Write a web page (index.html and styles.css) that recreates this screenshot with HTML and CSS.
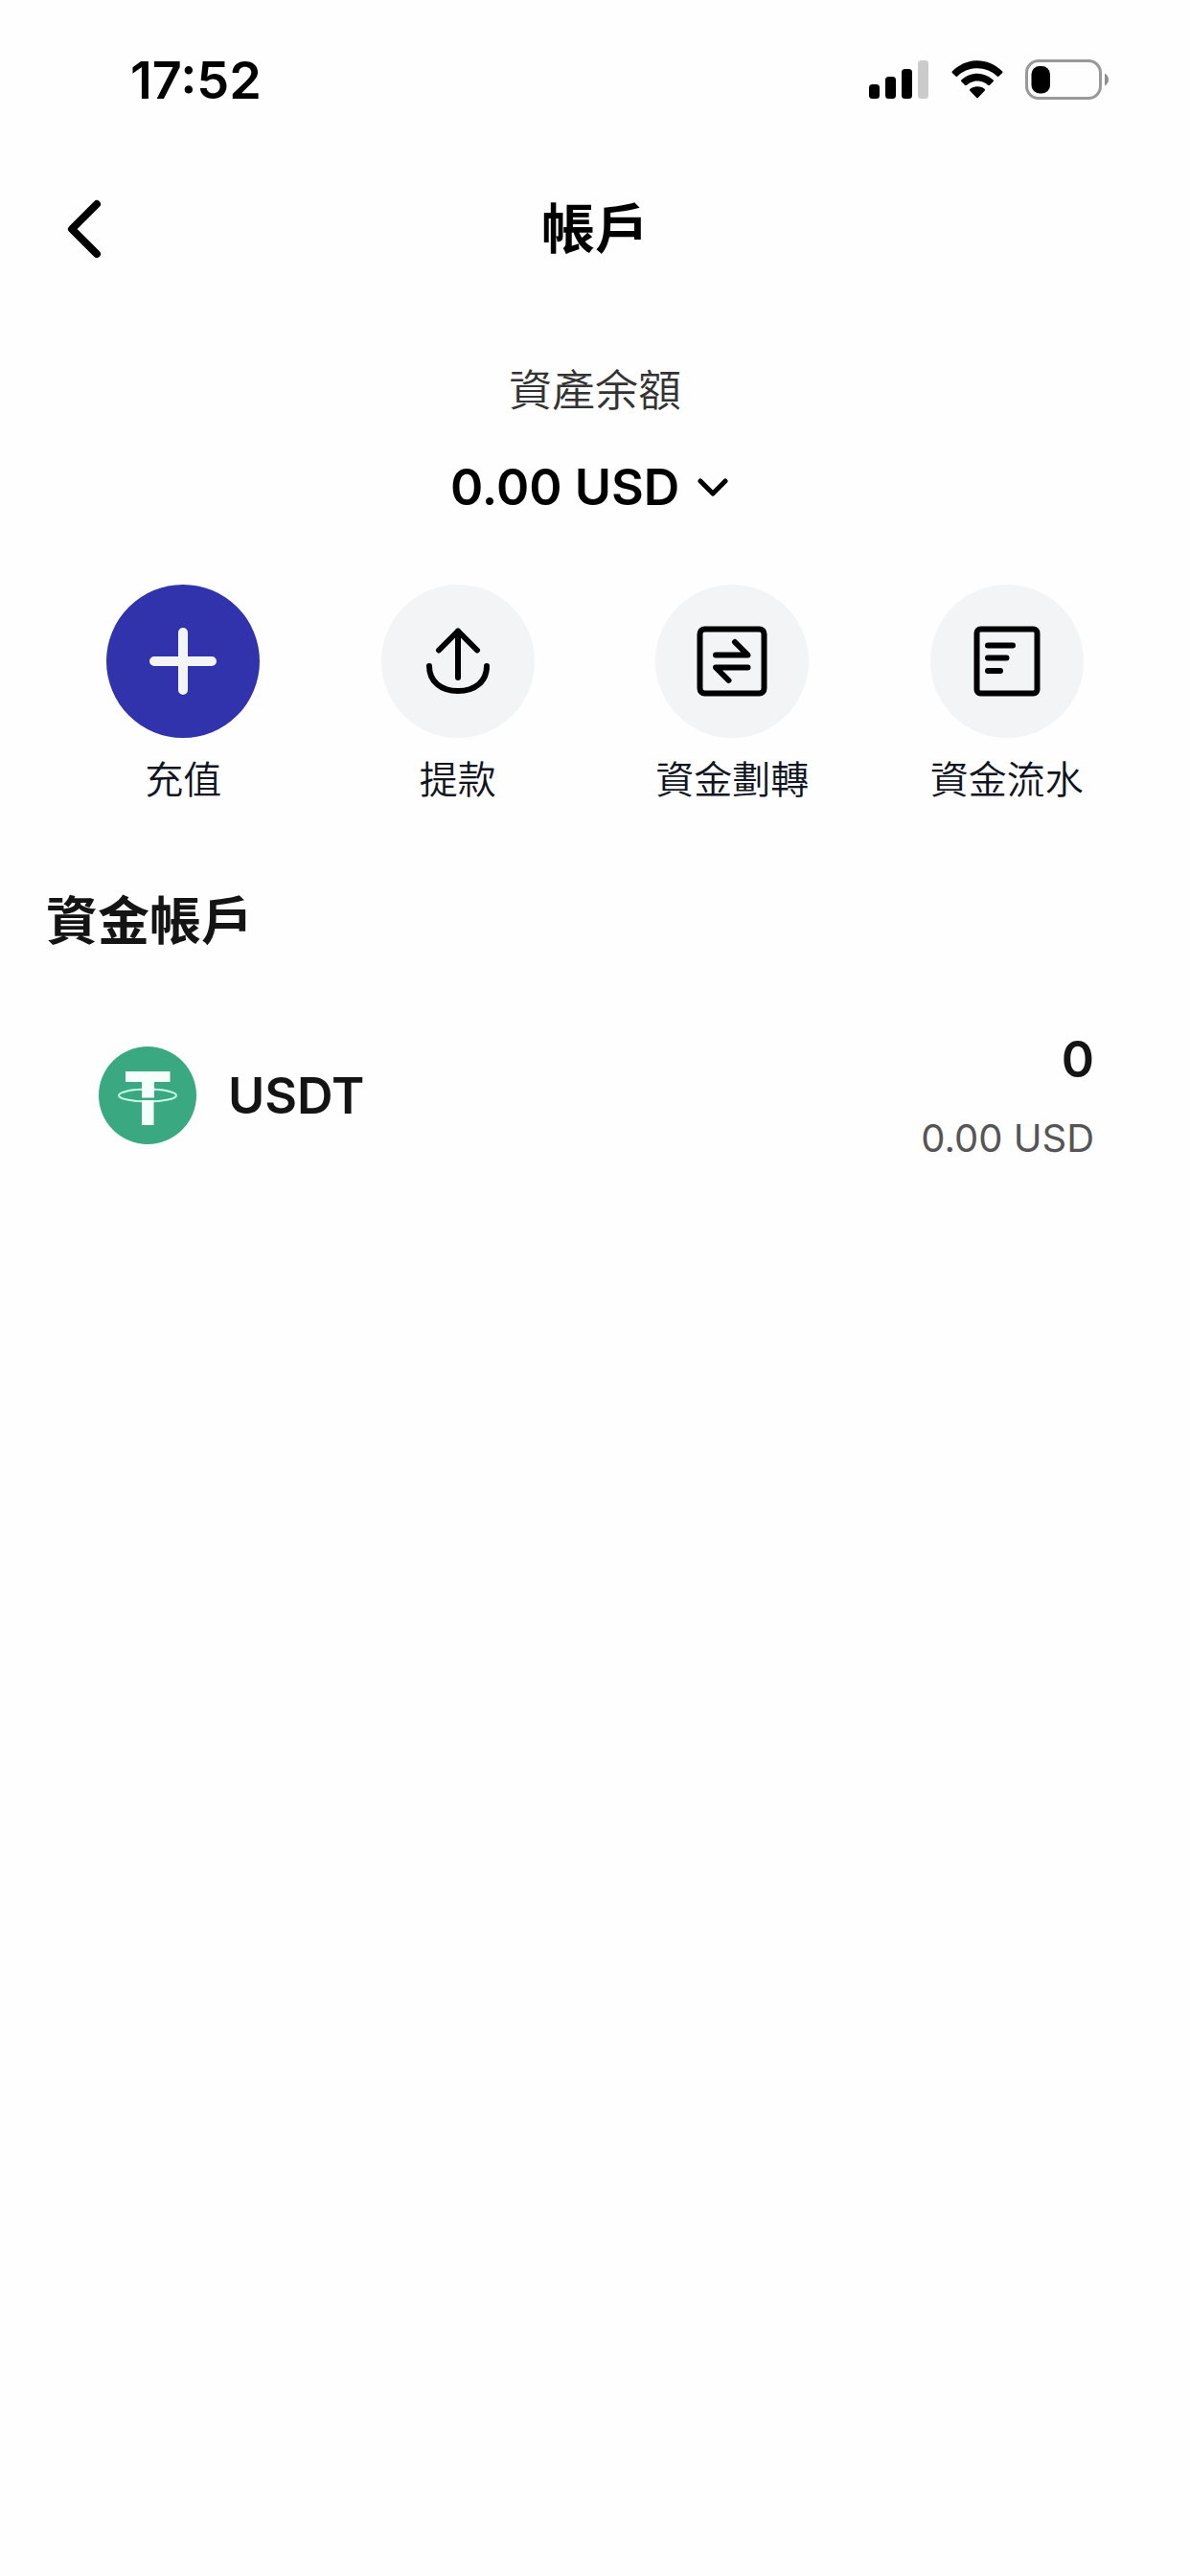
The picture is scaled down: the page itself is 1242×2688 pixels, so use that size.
FILE: index.html
```html
<!DOCTYPE html>
<html lang="zh-Hant">
<head>
  <meta charset="UTF-8">
  <meta name="viewport" content="width=device-width, initial-scale=1">
  <title>帳戶</title>
  <link rel="stylesheet" href="styles.css">
</head>
<body>
  <div class="status-bar">
    <span class="time">17:52</span>
    <div class="status-icons">
      <svg width="63" height="42" viewBox="0 0 63 42">
        <rect x="0" y="26" width="11" height="15" rx="3.5"/>
        <rect x="17" y="18" width="11" height="23" rx="3.5"/>
        <rect x="34" y="10" width="11" height="31" rx="3.5"/>
        <rect x="51" y="1" width="11" height="40" rx="3.5" fill="#cbcbcb"/>
      </svg>
      <svg width="54" height="42" viewBox="0 0 54 42">
        <path d="M1 12.2C16-2.500 38-2.500 53 12.200Q54 13.200 53 14.200L49.500 17.500Q48.600 18.300 47.600 17.400C36 6.500 18 6.500 6.400 17.400Q5.400 18.300 4.500 17.500L1 14.200Q0 13.200 1 12.200Z"/>
        <path d="M10.500 21.300C20 12.500 34 12.500 43.500 21.300Q44.500 22.300 43.500 23.300L40 26.700Q39 27.600 38 26.700C31.500 21.200 22.500 21.200 16 26.700Q15 27.600 14 26.700L10.500 23.300Q9.500 22.300 10.500 21.300Z"/>
        <path d="M19.500 30.700C24 27.500 30 27.500 34.500 30.700Q35.600 31.700 34.600 32.700L28 39.800Q27 40.800 26 39.800L19.400 32.700Q18.400 31.700 19.500 30.700Z"/>
      </svg>
      <svg width="88" height="42" viewBox="0 0 88 42">
        <rect x="1.500" y="1.500" width="77" height="39" rx="12.500" fill="none" stroke="#999" stroke-width="3"/>
        <rect x="6.500" y="7" width="19.500" height="28.500" rx="8.500"/>
        <path d="M83 14.500C88.300 17 88.300 25 83 27.500Z" fill="#8e8e8e"/>
      </svg>
    </div>
  </div>

  <header class="nav-bar">
    <button class="back" type="button" aria-label="返回">
      <svg width="36" height="62" viewBox="0 0 36 62">
        <path d="M31 5L5 31L31 57"/>
      </svg>
    </button>
    <h1>帳戶</h1>
  </header>

  <main>
    <section class="balance">
      <label for="currency">資產余額</label>
      <div class="balance-value">
        <select id="currency">
          <option>0.00 USD</option>
        </select>
        <svg width="56" height="56" viewBox="0 0 56 56">
          <path d="M15 22L28 35L41 22"/>
        </svg>
      </div>
    </section>

    <nav class="actions">
      <a class="action primary" href="#deposit">
        <svg viewBox="0 0 160 160">
          <path d="M80 50V110M50 80H110" stroke-width="10"/>
        </svg>
        <span>充值</span>
      </a>
      <a class="action" href="#withdraw">
        <svg viewBox="0 0 160 160">
          <path d="M80 97V48.500M60 68.500L80 48.500L100 68.500M50 85C50 101 62 111 80 111C98 111 110 101 110 85"/>
        </svg>
        <span>提款</span>
      </a>
      <a class="action" href="#transfer">
        <svg viewBox="0 0 160 160">
          <rect x="46.500" y="46.500" width="67" height="67" rx="5"/>
          <path d="M63 73.500H96.500L83 60M96.500 86.500H63L76.500 100"/>
        </svg>
        <span>資金劃轉</span>
      </a>
      <a class="action" href="#records">
        <svg viewBox="0 0 160 160">
          <rect x="48.500" y="46.500" width="63" height="67" rx="4"/>
          <path d="M60 63.500H86M60 76.500H79.500M60 90H73"/>
        </svg>
        <span>資金流水</span>
      </a>
    </nav>

    <section class="funds">
      <h2>資金帳戶</h2>
      <ul class="assets">
        <li>
          <svg class="coin" width="102" height="102" viewBox="0 0 102 102">
            <circle cx="51" cy="51" r="51" fill="#3aa981"/>
            <ellipse cx="51" cy="51" rx="30" ry="6.500" fill="none" stroke="#c9ffe9" stroke-width="2"/>
            <path d="M28 26H74.500V37H58V53.500H45V37H28ZM45 56H57.500V82H45Z" fill="#f4fffb"/>
          </svg>
          <span class="asset-name">USDT</span>
          <div class="asset-amount">
            <strong>0</strong>
            <span>0.00 USD</span>
          </div>
        </li>
      </ul>
    </section>
  </main>
</body>
</html>
```
FILE: styles.css
```css
/* Base styling */
* {
  box-sizing: border-box;
}

body {
  margin: 0;
  background: #fefefe;
  color: #000;
  font-family: Inter, "Noto Sans CJK TC", sans-serif;
}

h1, h2, ul {
  margin: 0;
  padding: 0;
}

/* Phone status bar */
.status-bar {
  display: flex;
  align-items: center;
  justify-content: space-between;
  height: 166px;
  padding: 0 84px 0 136px;
}

.time {
  font-size: 54px;
  font-weight: 600;
}

.status-icons {
  display: flex;
  gap: 23px;
}

/* Title bar */
.nav-bar {
  display: grid;
  grid-template-columns: 1fr auto 1fr;
  align-items: center;
  height: 146px;
  padding: 0 70px;
}

.nav-bar h1 {
  font-size: 56px;
  font-weight: 600;
  line-height: 64px;
}

.back {
  justify-self: start;
  display: flex;
  padding: 0;
  border: 0;
  background: none;
}

.back path {
  fill: none;
  stroke: #000;
  stroke-width: 8;
  stroke-linecap: round;
  stroke-linejoin: round;
}

/* Total balance */
.balance {
  display: flex;
  flex-direction: column;
  align-items: center;
  gap: 36px;
  padding-top: 64px;
}

.balance label {
  color: #333;
  font-size: 45px;
  font-weight: 350;
  line-height: 64px;
}

.balance-value {
  display: flex;
  align-items: center;
  gap: 6px;
}

.balance-value select {
  appearance: none;
  height: 64px;
  padding: 0;
  border: 0;
  background: none;
  color: #000;
  font-family: inherit;
  font-size: 52px;
  font-weight: 600;
}

.balance-value path {
  fill: none;
  stroke: #000;
  stroke-width: 5;
  stroke-linecap: round;
  stroke-linejoin: round;
}

/* Shortcut buttons */
.actions {
  display: grid;
  grid-template-columns: repeat(4, 1fr);
  padding: 70px 48px 0;
}

.action {
  display: flex;
  flex-direction: column;
  align-items: center;
  gap: 20px;
  color: #10141f;
  font-size: 40px;
  font-weight: 350;
  line-height: 48px;
  text-decoration: none;
}

.action svg {
  width: 160px;
  height: 160px;
  border-radius: 50%;
  background: #f3f4f6;
  fill: none;
  stroke: #000;
  stroke-width: 6;
  stroke-linecap: round;
  stroke-linejoin: round;
}

.action.primary svg {
  background: #3033ab;
  stroke: #f3f4f6;
}

/* Funding account */
.funds {
  padding-top: 92px;
}

.funds h2 {
  padding: 0 48px;
  color: #141414;
  font-size: 54px;
  font-weight: 600;
  line-height: 64px;
}

.assets {
  margin-top: 52px;
  list-style: none;
}

.assets li {
  display: flex;
  align-items: center;
  padding: 28px 100px 28px 103px;
  color: #141414;
}

.asset-name {
  margin-left: 33px;
  font-size: 52px;
  font-weight: 600;
}

.asset-amount {
  display: flex;
  flex-direction: column;
  align-items: flex-end;
  gap: 26px;
  margin-left: auto;
}

.asset-amount strong {
  font-size: 52px;
  font-weight: 600;
  line-height: 64px;
}

.asset-amount span {
  color: #555;
  font-size: 40px;
  line-height: 48px;
}
```
